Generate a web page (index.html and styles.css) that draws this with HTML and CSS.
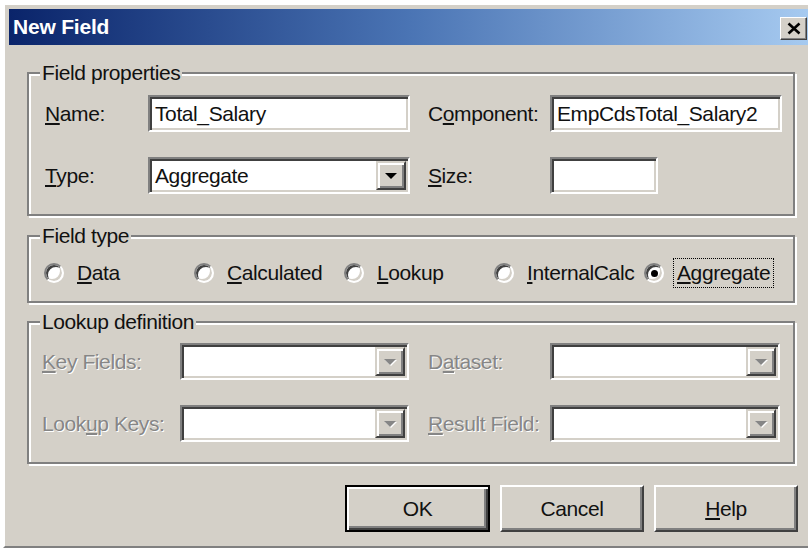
FILE: index.html
```html
<!DOCTYPE html>
<html lang="en">
<head>
<meta charset="utf-8">
<title>New Field</title>
<link rel="stylesheet" href="styles.css">
</head>
<body>
<div class="window">
  <div class="titlebar">
    <span class="title">New Field</span>
    <button class="close" type="button" aria-label="Close">
      <svg width="14" height="13" viewBox="0 0 14 13"><path d="M1.5 1.5 L12.5 11.5 M12.5 1.5 L1.5 11.5" stroke="#000" stroke-width="2.6" fill="none"/></svg>
    </button>
  </div>

  <div class="client">
    <div class="group props">
      <span class="caption">Field properties</span>
      <label class="lbl"><u>N</u>ame:</label>
      <div class="edit">Total_Salary</div>
      <label class="lbl right">C<u>o</u>mponent:</label>
      <div class="edit">EmpCdsTotal_Salary2</div>

      <label class="lbl"><u>T</u>ype:</label>
      <div class="combo"><span class="value">Aggregate</span><span class="drop"><i class="arrow"></i></span></div>
      <label class="lbl right"><u>S</u>ize:</label>
      <div class="edit size"></div>
    </div>

    <div class="group types">
      <span class="caption">Field type</span>
      <div class="radio"><i class="dot"></i><span><u>D</u>ata</span></div>
      <div class="radio"><i class="dot"></i><span><u>C</u>alculated</span></div>
      <div class="radio"><i class="dot"></i><span><u>L</u>ookup</span></div>
      <div class="radio"><i class="dot"></i><span><u>I</u>nternalCalc</span></div>
      <div class="radio checked focused"><i class="dot"></i><span><u>A</u>ggregate</span></div>
    </div>

    <div class="group lookup">
      <span class="caption">Lookup definition</span>
      <label class="lbl off"><u>K</u>ey Fields:</label>
      <div class="combo"><span class="value"></span><span class="drop"><i class="arrow"></i></span></div>
      <label class="lbl off right">D<u>a</u>taset:</label>
      <div class="combo"><span class="value"></span><span class="drop"><i class="arrow"></i></span></div>

      <label class="lbl off">Look<u>u</u>p Keys:</label>
      <div class="combo"><span class="value"></span><span class="drop"><i class="arrow"></i></span></div>
      <label class="lbl off right"><u>R</u>esult Field:</label>
      <div class="combo"><span class="value"></span><span class="drop"><i class="arrow"></i></span></div>
    </div>

    <div class="buttons">
      <button class="btn default" type="button">OK</button>
      <button class="btn" type="button">Cancel</button>
      <button class="btn" type="button"><u>H</u>elp</button>
    </div>
  </div>
</div>
</body>
</html>
```

FILE: styles.css
```css
* { box-sizing: border-box; }

html, body {
  margin: 0;
  padding: 0;
}

body {
  width: 808px;
  height: 548px;
  overflow: hidden;
  background: #fff;
  font-family: "Liberation Sans", Arial, sans-serif;
  font-size: 21px;
  letter-spacing: -0.4px;
  color: #111;
}

/* dialog frame */
.window {
  margin: 3px 0 0 3px;
  width: 805px;
  height: 545px;
  background: #d4d0c8;
  border-top: 2px solid #fff;
  border-left: 2px solid #fff;
  border-bottom: 2px solid #808080;
  padding: 4px 0 0 4px;
  display: flex;
  flex-direction: column;
}

.titlebar {
  height: 36px;
  flex: none;
  display: flex;
  align-items: center;
  justify-content: space-between;
  padding-left: 4px;
  background: linear-gradient(to right, #0a246a 0%, #4a74b4 50%, #a6caf0 100%);
}

.title {
  color: #fff;
  font-weight: bold;
  letter-spacing: -0.2px;
}

.close {
  width: 27px;
  height: 23px;
  margin: 3px 1px 0 0;
  padding: 0;
  background: #d4d0c8;
  border: 1px solid;
  border-color: #fff #404040 #404040 #fff;
  box-shadow: inset -1px -1px 0 #808080;
  display: flex;
  align-items: center;
  justify-content: center;
}

.client {
  flex: 1;
  padding: 27px 13px 0 18px;
  display: flex;
  flex-direction: column;
}

/* etched group boxes */
.group {
  position: relative;
  border: 2px solid #808080;
  box-shadow: inset 2px 2px 0 #fff, 2px 2px 0 #fff;
}

.caption {
  position: absolute;
  top: -13px;
  left: 11px;
  padding: 0 2px;
  line-height: 24px;
  background: #d4d0c8;
  white-space: nowrap;
}

.lbl {
  white-space: nowrap;
  line-height: 24px;
}

.lbl.right { padding-left: 18px; }

.lbl.off {
  color: #868686;
  text-shadow: 1px 1px 0 #fff;
}

.props {
  height: 144px;
  padding: 21px 0 20px 16px;
  display: grid;
  grid-template-columns: 103px 262px 140px 232px;
  grid-template-rows: 37px 37px;
  row-gap: 25px;
  align-items: center;
}

.lookup {
  margin-top: 18px;
  height: 143px;
  padding: 20px 0 20px 13px;
  display: grid;
  grid-template-columns: 138px 229px 141px 230px;
  grid-template-rows: 37px 37px;
  row-gap: 25px;
  align-items: center;
}

.lookup .lbl.right { padding-left: 19px; }

/* sunken edit fields */
.edit,
.combo {
  height: 37px;
  background: #fff;
  border: 2px solid;
  border-color: #808080 #fff #fff #808080;
  box-shadow: inset 2px 2px 0 #404040, inset -2px -2px 0 #d4d0c8;
  padding: 2px;
  display: flex;
  align-items: center;
  white-space: nowrap;
}

.edit { padding-left: 5px; }

.edit.size { width: 108px; }

.combo .value {
  flex: 1;
  padding-left: 3px;
}

.drop {
  width: 30px;
  align-self: stretch;
  background: #d4d0c8;
  border: 2px solid;
  border-color: #d4d0c8 #404040 #404040 #d4d0c8;
  box-shadow: inset 2px 2px 0 #fff, inset -2px -2px 0 #808080;
  display: flex;
  align-items: center;
  justify-content: center;
}

.arrow {
  width: 0;
  height: 0;
  border-left: 6px solid transparent;
  border-right: 6px solid transparent;
  border-top: 6px solid #000;
  margin-top: 1px;
}

.lookup .arrow {
  border-top-color: #868686;
  filter: drop-shadow(1px 1px 0 #fff);
}

/* radio row */
.types {
  margin-top: 19px;
  height: 68px;
  padding: 21px 0 0 15px;
  display: grid;
  grid-template-columns: repeat(5, 150px);
  align-items: start;
}

.radio {
  height: 30px;
  display: flex;
  align-items: center;
  white-space: nowrap;
}

.dot {
  width: 20px;
  height: 20px;
  flex: none;
  margin-right: 9px;
  border-radius: 50%;
  background: #fff;
  border: 2px solid;
  border-color: #808080 #fff #fff #808080;
  box-shadow: inset 2px 2px 0 #404040, inset -2px -2px 0 #d4d0c8;
  position: relative;
}

.radio.checked .dot::after {
  content: "";
  position: absolute;
  left: 4.5px;
  top: 4.5px;
  width: 7px;
  height: 7px;
  border-radius: 50%;
  background: #000;
}

.radio span {
  line-height: 24px;
  padding: 2px 3px;
  border: 1px solid transparent;
}

.radio.focused span { border: 1px dotted #000; }

/* command buttons */
.buttons {
  margin-top: 21px;
  margin-right: -3px;
  display: flex;
  justify-content: flex-end;
  gap: 10px;
}

.btn {
  width: 144px;
  height: 47px;
  padding: 0;
  font: inherit;
  letter-spacing: inherit;
  color: #111;
  background: #d4d0c8;
  border: 2px solid;
  border-color: #fff #404040 #404040 #fff;
  box-shadow: inset -2px -2px 0 #808080;
}

.btn.default {
  width: 145px;
  border-color: #000;
  box-shadow: inset 2px 2px 0 #fff, inset -2px -2px 0 #404040, inset -4px -4px 0 #808080;
}
```
